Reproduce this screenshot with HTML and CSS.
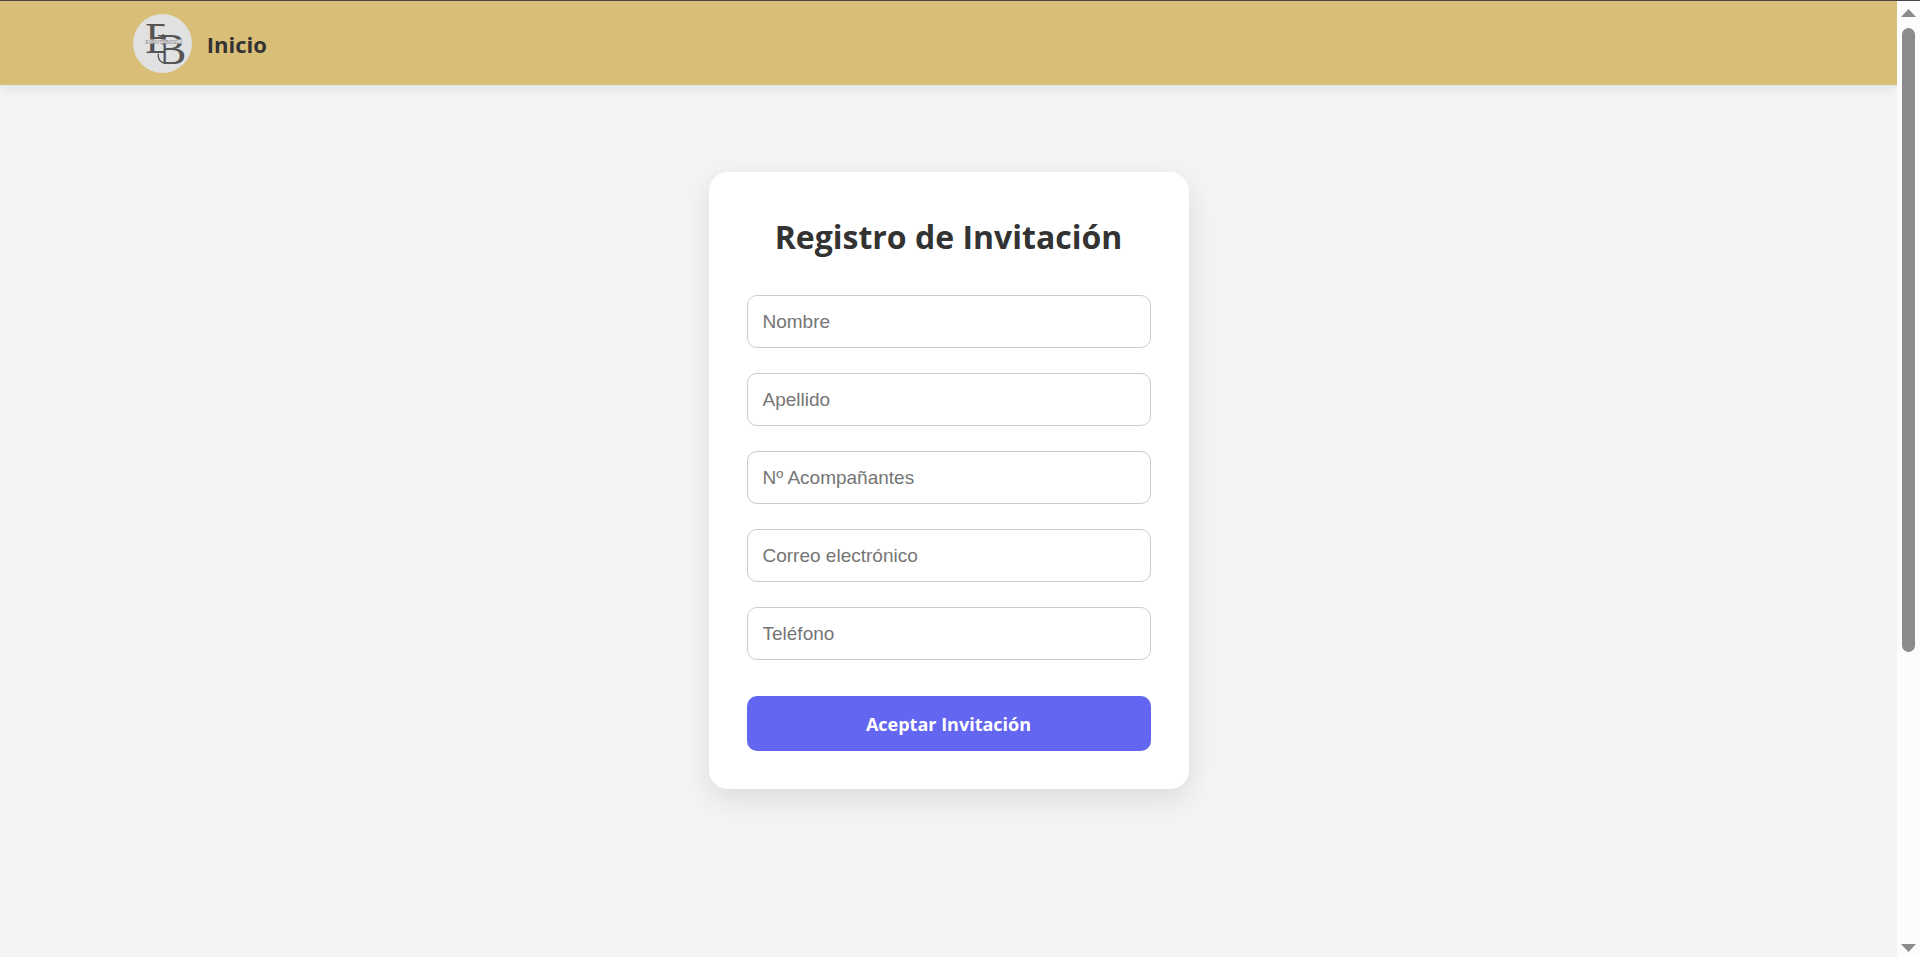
FILE: index.html
```html
<!DOCTYPE html>
<html lang="es">
<head>
<meta charset="utf-8">
<meta name="viewport" content="width=device-width, initial-scale=1">
<title>Registro de Invitación</title>
<link rel="stylesheet" href="styles.css">
</head>
<body>
<div class="page">
  <header class="navbar">
    <a class="brand" href="#">
      <svg class="logo" viewBox="0 0 58 58" aria-hidden="true">
        <clipPath id="clip-e"><path d="M8 6H31V42H8Z"/></clipPath>
        <clipPath id="clip-b"><path d="M24 16H52V52H30V30H24Z"/></clipPath>
        <circle cx="29" cy="29" r="29" fill="#e1e1e1"/>
        <g class="monogram">
          <g clip-path="url(#clip-e)"><text x="12" y="38" font-size="43">E</text></g>
          <g clip-path="url(#clip-b)"><text x="23" y="49" font-size="44">B</text></g>
        </g>
        <path d="M25 39C24 45 28 49 34 48" fill="none" stroke="#555" stroke-width="1.3"/>
        <path d="M11 25H48V29H11Z" fill="#e1e1e1" opacity=".9"/>
        <text class="logo-caption" x="12" y="29">EVENTSBIDE</text>
      </svg>
      <span>Inicio</span>
    </a>
  </header>
  <main class="content">
    <form class="card">
      <h1 class="title">Registro de Invitación</h1>
      <div class="fields">
        <input class="field" type="text" placeholder="Nombre" aria-label="Nombre">
        <input class="field" type="text" placeholder="Apellido" aria-label="Apellido">
        <input class="field" type="text" placeholder="Nº Acompañantes" aria-label="Nº Acompañantes">
        <input class="field" type="email" placeholder="Correo electrónico" aria-label="Correo electrónico">
        <input class="field" type="tel" placeholder="Teléfono" aria-label="Teléfono">
      </div>
      <button class="submit" type="button">Aceptar Invitación</button>
    </form>
  </main>
</div>
<div class="scrollbar" aria-hidden="true">
  <svg class="arrow" viewBox="0 0 15 8"><path d="M7.5 0L15 8H0Z"/></svg>
  <div class="track"><div class="thumb"></div></div>
  <svg class="arrow" viewBox="0 0 15 8"><path d="M0 0H15L7.5 8Z"/></svg>
</div>
</body>
</html>
```
FILE: styles.css
```css
* {
  box-sizing: border-box;
}

body {
  margin: 0;
  min-height: 100vh;
  display: grid;
  grid-template-columns: 1fr 23px;
  border-top: 1px solid #48464a;
  background: #f2f4f6;
  color: #333;
  font-family: "Segoe UI", "Open Sans", sans-serif;
}

.page {
  display: flex;
  flex-direction: column;
}

.navbar {
  padding: 13px 7% 12px;
  background: #d9be77;
  box-shadow: 0 4px 12px rgba(0, 0, 0, 0.08);
}

.brand {
  display: inline-flex;
  align-items: center;
  gap: 15px;
  vertical-align: top;
  color: #333;
  font-size: 22px;
  font-weight: 700;
  line-height: 28px;
  text-decoration: none;
}

.logo {
  width: 59px;
  height: 59px;
}

.monogram {
  fill: #555;
  font-family: "Liberation Serif", serif;
  font-weight: 400;
}

.logo-caption {
  fill: #888;
  font: 400 5px "Liberation Sans", sans-serif;
}

.content {
  padding: 87px 16px;
}

.card {
  max-width: 480px;
  margin: 0 auto;
  padding: 38px;
  border-radius: 19px;
  background: #fff;
  box-shadow: 0 10px 30px rgba(0, 0, 0, 0.1);
}

.title {
  margin: 3px 0 34px;
  font-size: 32px;
  font-weight: 700;
  line-height: 48px;
  text-align: center;
}

.fields {
  display: grid;
  gap: 25px;
}

.field {
  width: 100%;
  height: 53px;
  padding: 0 15px;
  border: 1px solid #ccc;
  border-radius: 10px;
  background: #fff;
  color: #333;
  font-family: "Liberation Sans", Arial, sans-serif;
  font-size: 19px;
}

.field::placeholder {
  color: #757575;
}

.submit {
  width: 100%;
  height: 55px;
  margin-top: 36px;
  border: 0;
  border-radius: 10px;
  background: #6366f1;
  color: #fff;
  font-family: inherit;
  font-size: 18px;
  font-weight: 700;
}

.scrollbar {
  display: flex;
  flex-direction: column;
  align-items: center;
  gap: 11px;
  padding: 8px 0 5px;
  background: #fcfcfc;
}

.arrow {
  width: 15px;
  height: 8px;
  fill: #8b8b8b;
}

.track {
  flex: 1;
  width: 13px;
}

.thumb {
  height: 69%;
  border-radius: 7px;
  background: #8b8b8b;
}
```
